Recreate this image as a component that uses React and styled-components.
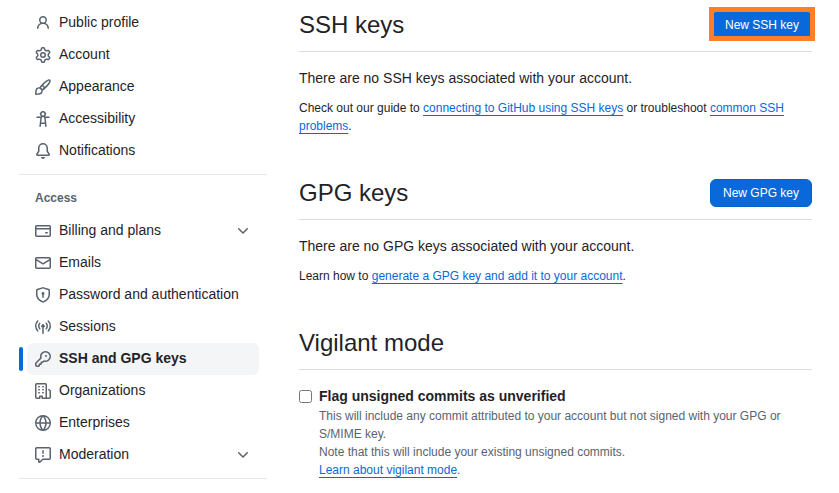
import React, { useState } from 'react'
import styled, { createGlobalStyle } from 'styled-components'

const icons = {
  person: 'M10.561 8.073a6.005 6.005 0 0 1 3.432 5.142.75.75 0 1 1-1.498.07 4.5 4.5 0 0 0-8.99 0 .75.75 0 0 1-1.498-.07 6.004 6.004 0 0 1 3.431-5.142 3.999 3.999 0 1 1 5.123 0ZM10.5 5a2.5 2.5 0 1 0-5 0 2.5 2.5 0 0 0 5 0Z',
  gear: 'M8 0a8.2 8.2 0 0 1 .701.031C9.444.095 9.99.645 10.16 1.29l.288 1.107c.018.066.079.158.212.224.231.114.454.243.668.386.123.082.233.09.299.071l1.103-.303c.644-.176 1.392.021 1.82.63.27.385.506.792.704 1.218.315.675.111 1.422-.364 1.891l-.814.806c-.049.048-.098.147-.088.294.016.257.016.515 0 .772-.01.147.038.246.088.294l.814.806c.475.469.679 1.216.364 1.891a7.977 7.977 0 0 1-.704 1.217c-.428.61-1.176.807-1.82.63l-1.102-.302c-.067-.019-.177-.011-.3.071a5.909 5.909 0 0 1-.668.386c-.133.066-.194.158-.211.224l-.29 1.106c-.168.646-.715 1.196-1.458 1.26a8.006 8.006 0 0 1-1.402 0c-.743-.064-1.289-.614-1.458-1.26l-.289-1.106c-.018-.066-.079-.158-.212-.224a5.738 5.738 0 0 1-.668-.386c-.123-.082-.233-.09-.299-.071l-1.103.303c-.644.176-1.392-.021-1.82-.63a8.12 8.12 0 0 1-.704-1.218c-.315-.675-.111-1.422.363-1.891l.815-.806c.05-.048.098-.147.088-.294a6.214 6.214 0 0 1 0-.772c.01-.147-.038-.246-.088-.294l-.815-.806C.635 6.045.431 5.298.746 4.623a7.92 7.92 0 0 1 .704-1.217c.428-.61 1.176-.807 1.82-.63l1.102.302c.067.019.177.011.3-.071.214-.143.437-.272.668-.386.133-.066.194-.158.211-.224l.29-1.106C6.009.645 6.556.095 7.299.03 7.53.01 7.764 0 8 0Zm-.571 1.525c-.036.003-.108.036-.137.146l-.289 1.105c-.147.561-.549.967-.998 1.189-.173.086-.34.183-.5.29-.417.278-.97.423-1.529.27l-1.103-.303c-.109-.03-.175.016-.195.045-.22.312-.412.644-.573.99-.014.031-.021.11.059.19l.815.806c.411.406.562.957.53 1.456a4.709 4.709 0 0 0 0 .582c.032.499-.119 1.05-.53 1.456l-.815.806c-.081.08-.073.159-.059.19.162.346.353.677.573.989.02.03.085.076.195.046l1.102-.303c.56-.153 1.113-.008 1.53.27.161.107.328.204.501.29.447.222.85.629.997 1.189l.289 1.105c.029.109.101.143.137.146a6.6 6.6 0 0 0 1.142 0c.036-.003.108-.036.137-.146l.289-1.105c.147-.561.549-.967.998-1.189.173-.086.34-.183.5-.29.417-.278.97-.423 1.529-.27l1.103.303c.109.029.175-.016.195-.045.22-.313.411-.644.573-.99.014-.031.021-.11-.059-.19l-.815-.806c-.411-.406-.562-.957-.53-1.456a4.709 4.709 0 0 0 0-.582c-.032-.499.119-1.05.53-1.456l.815-.806c.081-.08.073-.159.059-.19a6.464 6.464 0 0 0-.573-.989c-.02-.03-.085-.076-.195-.046l-1.102.303c-.56.153-1.113.008-1.53-.27a4.44 4.44 0 0 0-.501-.29c-.447-.222-.85-.629-.997-1.189l-.289-1.105c-.029-.11-.101-.143-.137-.146a6.6 6.6 0 0 0-1.142 0ZM11 8a3 3 0 1 1-6 0 3 3 0 0 1 6 0ZM9.5 8a1.5 1.5 0 1 0-3.001.001A1.5 1.5 0 0 0 9.5 8Z',
  paintbrush: 'M11.134 1.535c.7-.509 1.416-.942 2.076-1.155.649-.21 1.463-.267 2.069.34.603.601.568 1.411.368 2.07-.202.668-.624 1.39-1.125 2.096-1.011 1.424-2.496 2.987-3.775 4.249-1.098 1.084-2.132 1.839-3.04 2.3a3.744 3.744 0 0 1-1.055 3.217c-.431.431-1.065.691-1.657.861-.614.177-1.294.287-1.914.357A21.151 21.151 0 0 1 .797 16H.743l.007-.75H.749L.742 16a.75.75 0 0 1-.743-.742l.743-.008-.742.007v-.054a21.25 21.25 0 0 1 .13-2.284c.067-.647.187-1.287.358-1.914.17-.591.43-1.226.86-1.657a3.746 3.746 0 0 1 3.227-1.054c.466-.893 1.225-1.907 2.314-2.982 1.271-1.255 2.833-2.75 4.246-3.777ZM1.62 13.089c-.051.464-.086.929-.104 1.395.466-.018.932-.053 1.396-.104a10.511 10.511 0 0 0 1.668-.309c.526-.151.856-.325 1.011-.48a2.25 2.25 0 1 0-3.182-3.182c-.155.155-.329.485-.48 1.01a10.515 10.515 0 0 0-.309 1.67Zm10.396-10.34c-1.224.89-2.605 2.189-3.822 3.384l1.718 1.718c1.21-1.205 2.51-2.597 3.387-3.833.47-.662.78-1.227.912-1.662.134-.444.032-.551.009-.575h-.001V1.78c-.014-.014-.113-.113-.548.027-.432.14-.995.462-1.655.942Zm-4.832 7.266-.001.001a9.859 9.859 0 0 0 1.63-1.142L7.155 7.216a9.7 9.7 0 0 0-1.161 1.607c.482.302.889.71 1.19 1.192Z',
  accessibility: 'M9.923 5.302c.063.063.122.129.178.198H14A.75.75 0 0 1 14 7h-3.3l.578 5.163.362 2.997a.75.75 0 0 1-1.49.18L9.868 13H6.132l-.282 2.34a.75.75 0 0 1-1.49-.18l.362-2.997L5.3 7H2a.75.75 0 0 1 0-1.5h3.9a2.54 2.54 0 0 1 .176-.198 3 3 0 1 1 3.847 0ZM9.2 7.073h-.001a1.206 1.206 0 0 0-2.398 0L6.305 11.5h3.39ZM9.5 3a1.5 1.5 0 1 0-3.001.001A1.5 1.5 0 0 0 9.5 3Z',
  bell: 'M8 16a2 2 0 0 0 1.985-1.75c.017-.137-.097-.25-.235-.25h-3.5c-.138 0-.252.113-.235.25A2 2 0 0 0 8 16ZM3 5a5 5 0 0 1 10 0v2.947c0 .05.015.098.042.139l1.703 2.555A1.519 1.519 0 0 1 13.482 13H2.518a1.516 1.516 0 0 1-1.263-2.36l1.703-2.554A.255.255 0 0 0 3 7.947Zm5-3.5A3.5 3.5 0 0 0 4.5 5v2.947c0 .346-.102.683-.294.97l-1.703 2.556a.017.017 0 0 0-.003.01l.001.006c0 .002.002.004.004.006l.006.004.007.001h10.964l.007-.001.006-.004.004-.006.001-.007a.017.017 0 0 0-.003-.01l-1.703-2.554a1.745 1.745 0 0 1-.294-.97V5A3.5 3.5 0 0 0 8 1.5Z',
  creditCard: 'M10.75 9a.75.75 0 0 0 0 1.5h1.5a.75.75 0 0 0 0-1.5h-1.5ZM0 3.75C0 2.784.784 2 1.75 2h12.5c.966 0 1.75.784 1.75 1.75v8.5A1.75 1.75 0 0 1 14.25 14H1.75A1.75 1.75 0 0 1 0 12.25ZM14.5 6.5h-13v5.75c0 .138.112.25.25.25h12.5a.25.25 0 0 0 .25-.25Zm0-2.75a.25.25 0 0 0-.25-.25H1.75a.25.25 0 0 0-.25.25V5h13Z',
  mail: 'M1.75 2h12.5c.966 0 1.75.784 1.75 1.75v8.5A1.75 1.75 0 0 1 14.25 14H1.75A1.75 1.75 0 0 1 0 12.25v-8.5C0 2.784.784 2 1.75 2ZM1.5 12.251c0 .138.112.25.25.25h12.5a.25.25 0 0 0 .25-.25V5.809L8.38 9.397a.75.75 0 0 1-.76 0L1.5 5.809v6.442Zm13-8.181v-.32a.25.25 0 0 0-.25-.25H1.75a.25.25 0 0 0-.25.25v.32L8 7.88Z',
  shieldLock: 'm8.533.133 5.25 1.68A1.75 1.75 0 0 1 15 3.48V7c0 1.566-.32 3.182-1.303 4.682-.983 1.498-2.585 2.813-5.032 3.855a1.697 1.697 0 0 1-1.33 0c-2.447-1.042-4.049-2.357-5.032-3.855C1.32 10.182 1 8.566 1 7V3.48a1.755 1.755 0 0 1 1.217-1.667l5.25-1.68a1.748 1.748 0 0 1 1.066 0Zm-.61 1.429.001.001-5.25 1.68a.251.251 0 0 0-.174.237V7c0 1.36.275 2.666 1.057 3.859.784 1.194 2.121 2.342 4.366 3.298a.196.196 0 0 0 .154 0c2.245-.957 3.582-2.103 4.366-3.297C13.225 9.666 13.5 8.358 13.5 7V3.48a.25.25 0 0 0-.174-.238l-5.25-1.68a.25.25 0 0 0-.153 0ZM9.5 6.5c0 .536-.286 1.032-.75 1.3v2.45a.75.75 0 0 1-1.5 0V7.8A1.5 1.5 0 1 1 9.5 6.5Z',
  broadcast: 'M8.75 8.582v5.668a.75.75 0 0 1-1.5 0V8.582a1.75 1.75 0 1 1 1.5 0Zm3.983-7.125a.75.75 0 0 1 1.06.026A7.976 7.976 0 0 1 16 7c0 2.139-.84 4.083-2.207 5.517a.75.75 0 1 1-1.086-1.034A6.474 6.474 0 0 0 14.5 7a6.474 6.474 0 0 0-1.793-4.483.75.75 0 0 1 .026-1.06Zm-9.466 0c.3.286.312.76.026 1.06A6.474 6.474 0 0 0 1.5 7a6.47 6.47 0 0 0 1.793 4.483.75.75 0 0 1-1.086 1.034A7.973 7.973 0 0 1 0 7c0-2.139.84-4.083 2.207-5.517a.75.75 0 0 1 1.06-.026Zm8.556 2.321A4.988 4.988 0 0 1 13 7a4.988 4.988 0 0 1-1.177 3.222.75.75 0 1 1-1.146-.967A3.487 3.487 0 0 0 11.5 7c0-.86-.309-1.645-.823-2.255a.75.75 0 0 1 1.146-.967Zm-6.492.958A3.48 3.48 0 0 0 4.5 7a3.48 3.48 0 0 0 .823 2.255.75.75 0 0 1-1.146.967A4.981 4.981 0 0 1 3 7a4.982 4.982 0 0 1 1.188-3.236.75.75 0 1 1 1.143.972Z',
  key: 'M10.5 0a5.499 5.499 0 1 1-1.288 10.848l-.932.932a.749.749 0 0 1-.53.22H7v.75a.749.749 0 0 1-.22.53l-.5.5a.749.749 0 0 1-.53.22H5v.75a.749.749 0 0 1-.22.53l-.5.5a.749.749 0 0 1-.53.22h-2A1.75 1.75 0 0 1 0 14.25v-2c0-.199.079-.389.22-.53l4.932-4.932A5.5 5.5 0 0 1 10.5 0Zm-4 5.5c-.001.431.069.86.205 1.269a.75.75 0 0 1-.181.768L1.5 12.56v1.69c0 .138.112.25.25.25h1.69l.06-.06v-1.19a.75.75 0 0 1 .75-.75h1.19l.06-.06v-1.19a.75.75 0 0 1 .75-.75h1.19l1.023-1.025a.75.75 0 0 1 .768-.18A4 4 0 1 0 6.5 5.5ZM11 6a1 1 0 1 1 0-2 1 1 0 0 1 0 2Z',
  organization: 'M1.75 16A1.75 1.75 0 0 1 0 14.25V1.75C0 .784.784 0 1.75 0h8.5C11.216 0 12 .784 12 1.75v12.5c0 .085-.006.168-.018.25h2.268a.25.25 0 0 0 .25-.25V8.285a.25.25 0 0 0-.111-.208l-1.055-.703a.749.749 0 1 1 .832-1.248l1.055.703c.487.325.779.871.779 1.456v5.965A1.75 1.75 0 0 1 14.25 16h-3.5a.766.766 0 0 1-.197-.026c-.099.017-.2.026-.303.026h-3a.75.75 0 0 1-.75-.75V14h-1v1.25a.75.75 0 0 1-.75.75Zm-.25-1.75c0 .138.112.25.25.25H4v-1.25a.75.75 0 0 1 .75-.75h2.5a.75.75 0 0 1 .75.75v1.25h2.25a.25.25 0 0 0 .25-.25V1.75a.25.25 0 0 0-.25-.25h-8.5a.25.25 0 0 0-.25.25ZM3.75 6h.5a.75.75 0 0 1 0 1.5h-.5a.75.75 0 0 1 0-1.5ZM3 3.75A.75.75 0 0 1 3.75 3h.5a.75.75 0 0 1 0 1.5h-.5A.75.75 0 0 1 3 3.75Zm4 3A.75.75 0 0 1 7.75 6h.5a.75.75 0 0 1 0 1.5h-.5A.75.75 0 0 1 7 6.75ZM7.75 3h.5a.75.75 0 0 1 0 1.5h-.5a.75.75 0 0 1 0-1.5ZM3 9.75A.75.75 0 0 1 3.75 9h.5a.75.75 0 0 1 0 1.5h-.5A.75.75 0 0 1 3 9.75ZM7.75 9h.5a.75.75 0 0 1 0 1.5h-.5a.75.75 0 0 1 0-1.5Z',
  globe: 'M8 0a8 8 0 1 1 0 16A8 8 0 0 1 8 0ZM5.78 8.75a9.64 9.64 0 0 0 1.363 4.177c.255.426.542.832.857 1.215.245-.296.551-.705.857-1.215A9.64 9.64 0 0 0 10.22 8.75Zm4.44-1.5a9.64 9.64 0 0 0-1.363-4.177c-.307-.51-.612-.919-.857-1.215a9.927 9.927 0 0 0-.857 1.215A9.64 9.64 0 0 0 5.78 7.25Zm-5.944 1.5H1.543a6.507 6.507 0 0 0 4.666 5.5c-.123-.181-.24-.365-.352-.552-.715-1.192-1.437-2.874-1.581-4.948Zm-2.733-1.5h2.733c.144-2.074.866-3.756 1.58-4.948.12-.197.237-.381.353-.552a6.507 6.507 0 0 0-4.666 5.5Zm10.181 1.5c-.144 2.074-.866 3.756-1.58 4.948-.12.197-.237.381-.353.552a6.507 6.507 0 0 0 4.666-5.5Zm2.733-1.5a6.507 6.507 0 0 0-4.666-5.5c.123.181.24.365.353.552.714 1.192 1.436 2.874 1.58 4.948Z',
  report: 'M0 1.75C0 .784.784 0 1.75 0h12.5C15.216 0 16 .784 16 1.75v9.5A1.75 1.75 0 0 1 14.25 13H8.06l-2.573 2.573A1.458 1.458 0 0 1 3 14.543V13H1.75A1.75 1.75 0 0 1 0 11.25Zm1.75-.25a.25.25 0 0 0-.25.25v9.5c0 .138.112.25.25.25h2a.75.75 0 0 1 .75.75v2.19l2.72-2.72a.749.749 0 0 1 .53-.22h6.5a.25.25 0 0 0 .25-.25v-9.5a.25.25 0 0 0-.25-.25Zm7 2.25v2.5a.75.75 0 0 1-1.5 0v-2.5a.75.75 0 0 1 1.5 0ZM9 9a1 1 0 1 1-2 0 1 1 0 0 1 2 0Z',
  chevronDown: 'M12.78 5.22a.749.749 0 0 1 0 1.06l-4.25 4.25a.749.749 0 0 1-1.06 0L3.22 6.28a.749.749 0 1 1 1.06-1.06L8 8.939l3.72-3.719a.749.749 0 0 1 1.06 0Z',
}

const accountItems = [
  { icon: 'person', label: 'Public profile' },
  { icon: 'gear', label: 'Account' },
  { icon: 'paintbrush', label: 'Appearance' },
  { icon: 'accessibility', label: 'Accessibility' },
  { icon: 'bell', label: 'Notifications' },
]

const accessItems = [
  { icon: 'creditCard', label: 'Billing and plans', expandable: true },
  { icon: 'mail', label: 'Emails' },
  { icon: 'shieldLock', label: 'Password and authentication' },
  { icon: 'broadcast', label: 'Sessions' },
  { icon: 'key', label: 'SSH and GPG keys', current: true },
  { icon: 'organization', label: 'Organizations' },
  { icon: 'globe', label: 'Enterprises' },
  { icon: 'report', label: 'Moderation', expandable: true },
]

const Icon = ({ name }) => (
  <IconSvg viewBox="0 0 16 16" aria-hidden="true">
    <path d={icons[name]} />
  </IconSvg>
)

const NavItems = ({ items }) => (
  <NavList>
    {items.map(({ icon, label, current, expandable }) => (
      <NavItem key={label} $current={current}>
        {expandable
          ? (
            <NavButton type="button" aria-expanded="false">
              <Icon name={icon} />
              <NavLabel>{label}</NavLabel>
              <Icon name="chevronDown" />
            </NavButton>
          )
          : (
            <NavLink href="#" aria-current={current ? 'page' : undefined}>
              <Icon name={icon} />
              <NavLabel>{label}</NavLabel>
            </NavLink>
          )
        }
      </NavItem>
    ))}
  </NavList>
)

const App = () => {
  const [flagUnsigned, setFlagUnsigned] = useState(false)

  return (
    <>
      <GlobalStyle />
      <Page>
        <Sidebar aria-label="Settings">
          <NavItems items={accountItems} />
          <Divider />
          <NavTitle>Access</NavTitle>
          <NavItems items={accessItems} />
          <Divider />
        </Sidebar>

        <Main>
          <Section>
            <SectionHeader>
              <Title>SSH keys</Title>
              <PrimaryButton type="button" $marked>New SSH key</PrimaryButton>
            </SectionHeader>
            <Lead>There are no SSH keys associated with your account.</Lead>
            <Help>
              Check out our guide to <TextLink href="#">connecting to GitHub using SSH keys</TextLink> or
              troubleshoot <TextLink href="#">common SSH problems</TextLink>.
            </Help>
          </Section>

          <Section>
            <SectionHeader>
              <Title>GPG keys</Title>
              <PrimaryButton type="button">New GPG key</PrimaryButton>
            </SectionHeader>
            <Lead>There are no GPG keys associated with your account.</Lead>
            <Help>
              Learn how to <TextLink href="#">generate a GPG key and add it to your account</TextLink>.
            </Help>
          </Section>

          <Section>
            <SectionHeader>
              <Title>Vigilant mode</Title>
            </SectionHeader>
            <Option>
              <Checkbox
                id="vigilant"
                type="checkbox"
                checked={flagUnsigned}
                onChange={(e) => setFlagUnsigned(e.target.checked)}
                aria-describedby="vigilant-note"
              />
              <div>
                <OptionLabel htmlFor="vigilant">Flag unsigned commits as unverified</OptionLabel>
                <Note id="vigilant-note">
                  This will include any commit attributed to your account but not signed with your GPG or S/MIME key.
                  <br />
                  Note that this will include your existing unsigned commits.
                  <br />
                  <TextLink href="#">Learn about vigilant mode</TextLink>.
                </Note>
              </div>
            </Option>
          </Section>
        </Main>
      </Page>
    </>
  )
}

export default App

const GlobalStyle = createGlobalStyle`
  * {
    box-sizing: border-box;
  }

  body {
    margin: 0;
    background: #ffffff;
    color: #1f2328;
    font-family: "Liberation Sans", Arial, sans-serif;
    font-size: 14px;
    line-height: 21px;
  }
`

const Page = styled.div`
  display: grid;
  grid-template-columns: 248px minmax(0, 1fr);
  gap: 32px;
  padding: 7px 27px 7px 19px;
`

const Sidebar = styled.nav`
  min-width: 0;
`

const NavList = styled.ul`
  list-style: none;
  margin: 0;
  padding: 0 8px;
`

const NavItem = styled.li`
  position: relative;
  border-radius: 6px;
  background: ${props => props.$current ? '#f4f5f7' : 'transparent'};
  font-weight: ${props => props.$current ? 600 : 400};

  &::before {
    content: ${props => props.$current ? '""' : 'none'};
    position: absolute;
    top: 4px;
    bottom: 4px;
    left: -8px;
    width: 4px;
    border-radius: 6px;
    background: #0969da;
  }
`

const NavLink = styled.a`
  display: flex;
  align-items: center;
  gap: 8px;
  width: 100%;
  height: 32px;
  padding: 0 8px;
  border: 0;
  background: none;
  color: #1f2328;
  font: inherit;
  text-align: left;
  text-decoration: none;
  cursor: pointer;
`

const NavButton = styled(NavLink).attrs({ as: 'button' })``

const NavLabel = styled.span`
  flex: 1;
  line-height: 20px;
  padding-bottom: 2px;
`

const IconSvg = styled.svg`
  flex: none;
  width: 16px;
  height: 16px;
  fill: #59636e;
`

const NavTitle = styled.h3`
  margin: 0;
  padding: 14px 16px 8px;
  color: #59636e;
  font-size: 12px;
  font-weight: 600;
  line-height: 18px;
`

const Divider = styled.hr`
  height: 1px;
  margin: 7px 0 0;
  border: 0;
  background: #e6e9ec;
`

const Main = styled.main`
  display: flex;
  flex-direction: column;
  gap: 40px;
  min-width: 0;
`

const Section = styled.section`
  min-width: 0;
`

const SectionHeader = styled.div`
  display: flex;
  align-items: center;
  justify-content: space-between;
  margin-bottom: 16px;
  padding-bottom: 8px;
  border-bottom: 1px solid #d8dde2;
`

const Title = styled.h2`
  margin: 0;
  font-size: 24px;
  font-weight: 400;
  line-height: 36px;
`

const PrimaryButton = styled.button`
  position: relative;
  height: 28px;
  padding: 0 12px;
  border: 1px solid #0860ca;
  border-radius: 6px;
  background: #0969da;
  color: #ffffff;
  font-family: inherit;
  font-size: 12px;
  line-height: 20px;
  cursor: pointer;

  &::after {
    content: ${props => props.$marked ? '""' : 'none'};
    position: absolute;
    inset: -5px -4px -3px;
    border: 5px solid #ff7f27;
  }
`

const Lead = styled.p`
  margin: 0 0 10px;
`

const Help = styled.p`
  margin: 0;
  font-size: 12px;
  line-height: 18px;
`

const TextLink = styled.a`
  color: #0969da;
  text-decoration: underline;
  text-underline-offset: 3px;
`

const Option = styled.div`
  display: flex;
  align-items: flex-start;
  gap: 7px;
`

const Checkbox = styled.input`
  flex: none;
  width: 13px;
  height: 13px;
  margin: 4px 0 0;
`

const OptionLabel = styled.label`
  display: block;
  font-weight: 600;
`

const Note = styled.p`
  margin: 0;
  color: #59636e;
  font-size: 12px;
  line-height: 18px;
`
